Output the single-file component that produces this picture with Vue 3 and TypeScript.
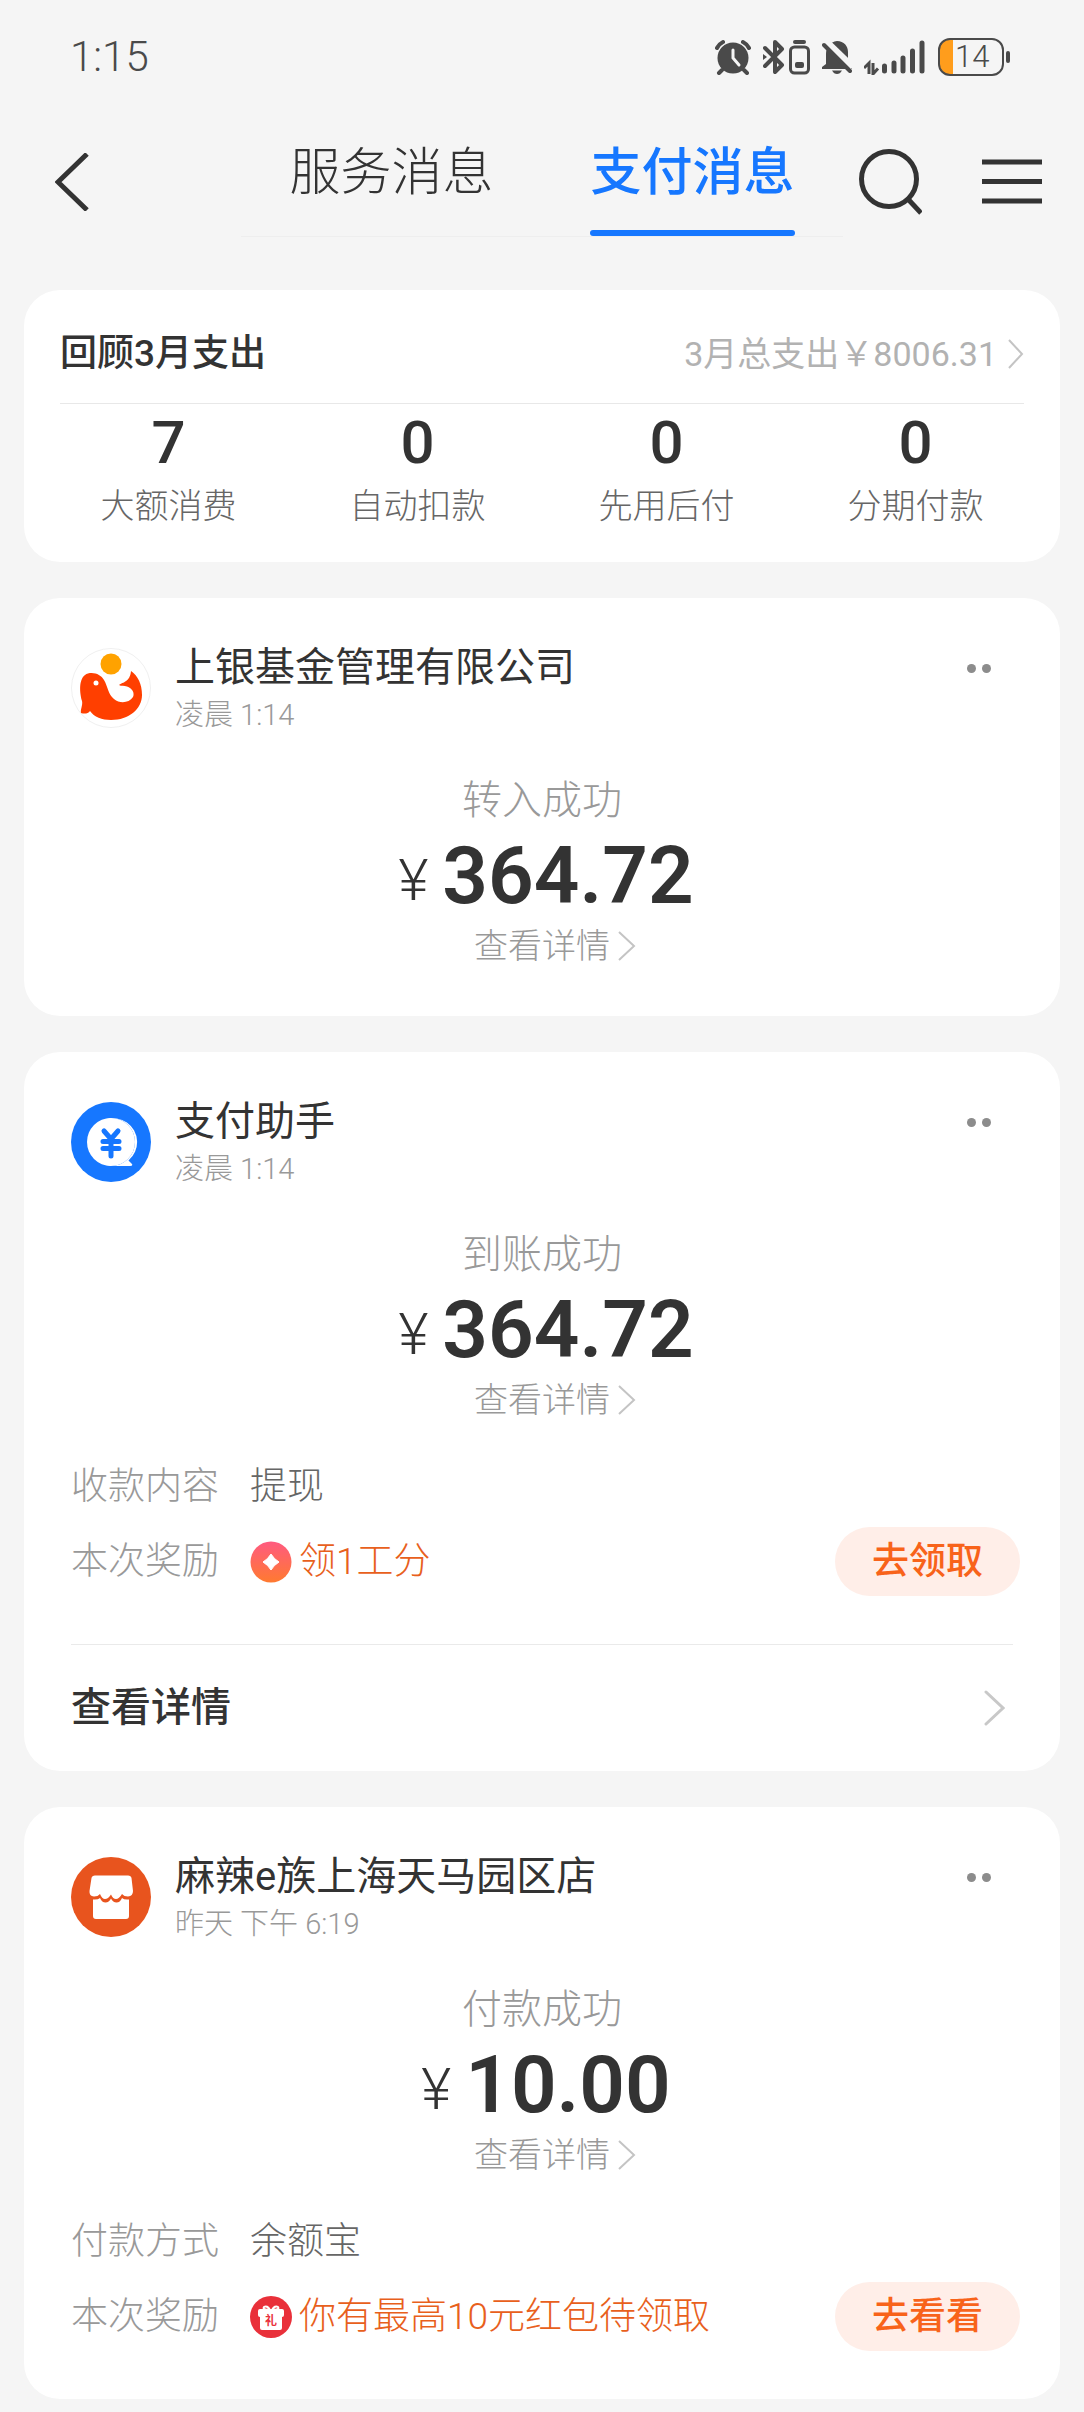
<script setup lang="ts">
interface Stat {
  value: number
  label: string
}

interface Detail {
  label: string
  value: string
  icon?: 'coin' | 'gift'
  action?: string
}

interface Message {
  logo: 'whale' | 'yuan' | 'shop'
  sender: string
  time: string
  status: string
  amount: string
  details: Detail[]
  footer?: string
}

const stats: Stat[] = [
  { value: 7, label: '大额消费' },
  { value: 0, label: '自动扣款' },
  { value: 0, label: '先用后付' },
  { value: 0, label: '分期付款' },
]

const messages: Message[] = [
  {
    logo: 'whale',
    sender: '上银基金管理有限公司',
    time: '凌晨 1:14',
    status: '转入成功',
    amount: '364.72',
    details: [],
  },
  {
    logo: 'yuan',
    sender: '支付助手',
    time: '凌晨 1:14',
    status: '到账成功',
    amount: '364.72',
    details: [
      { label: '收款内容', value: '提现' },
      { label: '本次奖励', value: '领1工分', icon: 'coin', action: '去领取' },
    ],
    footer: '查看详情',
  },
  {
    logo: 'shop',
    sender: '麻辣e族上海天马园区店',
    time: '昨天 下午 6:19',
    status: '付款成功',
    amount: '10.00',
    details: [
      { label: '付款方式', value: '余额宝' },
      { label: '本次奖励', value: '你有最高10元红包待领取', icon: 'gift', action: '去看看' },
    ],
  },
]
</script>

<template>
  <div class="page">
    <div class="status-bar">
      <span class="clock">1:15</span>
      <div class="status-icons">
        <svg class="i-alarm" width="36" height="36" viewBox="0 0 36 36">
          <circle cx="18" cy="19" r="15.500" fill="#4a4a4a" />
          <path d="M2 9Q4 5 8 3M34 9Q32 5 28 3M7 31L4 34M29 31L32 34" fill="none" stroke="#4a4a4a" stroke-width="4" stroke-linecap="round" />
          <path d="M18 11V19L24 26" fill="none" stroke="#f5f5f5" stroke-width="3" stroke-linecap="round" />
        </svg>
        <svg class="i-bt" width="22" height="36" viewBox="0 0 22 36">
          <path d="M2 9L19 26L12 33V3L19 10L2 27" fill="none" stroke="#4a4a4a" stroke-width="4" stroke-linecap="round" stroke-linejoin="round" />
          <path d="M0 15L4 18L0 21Z" fill="#4a4a4a" />
        </svg>
        <svg class="i-device" width="21" height="36" viewBox="0 0 21 36">
          <rect x="4" y="1" width="13" height="4" rx="2" fill="#4a4a4a" />
          <rect x="1.500" y="8" width="18" height="26" rx="4" fill="none" stroke="#4a4a4a" stroke-width="3" />
          <rect x="6" y="23" width="9" height="6" rx="2" fill="#4a4a4a" />
        </svg>
        <svg class="i-bell" width="30" height="36" viewBox="0 0 30 36">
          <path d="M15 2C8 3 4 9 4 15V25L0 28V30H30V27L26 22V13C26 7 22 2 15 2Z" fill="#4a4a4a" />
          <path d="M10 31.500H20Q18 35 15 35T10 31.500Z" fill="#4a4a4a" />
          <path d="M0 0L30 29" stroke="#f5f5f5" stroke-width="9" />
          <path d="M2 6L28 32" stroke="#4a4a4a" stroke-width="4" stroke-linecap="round" />
        </svg>
        <svg class="i-signal" width="62" height="36" viewBox="0 0 62 36">
          <path d="M0 29L5 24V35M9 24V35L14 29.500" fill="none" stroke="#4a4a4a" stroke-width="3" />
          <path d="M20.500 27V32M30 24V32M39 19V32M48.500 12V32M58 4V32" stroke="#4a4a4a" stroke-width="5" stroke-linecap="round" />
        </svg>
        <div class="battery">
          <span class="battery-body">14</span>
          <span class="battery-cap"></span>
        </div>
      </div>
    </div>

    <nav class="nav">
      <button class="icon-button" type="button" aria-label="返回">
        <svg width="34" height="58" viewBox="0 0 34 58">
          <path d="M32 1L3 29L32 57" fill="none" stroke="#333" stroke-width="5" />
        </svg>
      </button>
      <div class="tabs" role="tablist">
        <button class="tab" type="button" role="tab" aria-selected="false">
          <span class="tab-label">服务消息</span>
        </button>
        <button class="tab active" type="button" role="tab" aria-selected="true">
          <span class="tab-label">支付消息</span>
        </button>
      </div>
      <button class="icon-button" type="button" aria-label="搜索">
        <svg width="63" height="66" viewBox="0 0 63 66">
          <circle cx="30" cy="30" r="27.500" fill="none" stroke="#333" stroke-width="5" />
          <path d="M48 49L62 64" stroke="#333" stroke-width="5" />
        </svg>
      </button>
      <button class="icon-button menu" type="button" aria-label="菜单">
        <svg width="60" height="46" viewBox="0 0 60 46">
          <path d="M0 3H60M0 22.500H60M0 42H60" stroke="#333" stroke-width="5" />
        </svg>
      </button>
    </nav>

    <main class="feed">
      <section class="card summary">
        <div class="summary-head">
          <h2 class="summary-title">回顾3月支出</h2>
          <a class="summary-link" href="#">
            <span>3月总支出￥8006.31</span>
            <svg width="16" height="30" viewBox="0 0 16 30">
              <path d="M1 1L14 15L1 29" fill="none" stroke="#c4c4c4" stroke-width="2" />
            </svg>
          </a>
        </div>
        <ul class="stats">
          <li v-for="stat in stats" :key="stat.label" class="stat">
            <span class="stat-value">{{ stat.value }}</span>
            <span class="stat-label">{{ stat.label }}</span>
          </li>
        </ul>
      </section>

      <article v-for="message in messages" :key="message.sender" class="card message">
        <header class="head">
          <svg v-if="message.logo === 'whale'" class="logo" viewBox="0 0 80 80">
            <circle cx="40" cy="40" r="39.500" fill="#fff" stroke="#f0f0f0" />
            <circle cx="40" cy="16" r="10.500" fill="#ffa200" />
            <path d="M17 25.500C24 24 30 27 33 32C37 39 37 46 43 51C49 56 58 55 62 49C64 45 61 40 56 38.500C53 37.500 50 38.500 48 37C52 34 59 34 60 23C67 28 71 36 71 47C71 61 58 72 40 72C31 72 23 69 19 63C17 66 13 66 10 65C9 62 12 57 11 53C8 42 8 28 17 25.500Z" fill="#ff3f00" />
            <circle cx="25" cy="35" r="2.500" fill="#fff" />
          </svg>
          <svg v-else-if="message.logo === 'yuan'" class="logo" viewBox="0 0 80 80">
            <circle cx="40" cy="40" r="40" fill="#1677ff" />
            <path d="M40 16A24 24 0 1 1 40 64H59Q62 64 61 62L57.500 58.500A24 24 0 1 0 40 64Z" fill="#fff" />
            <circle cx="40" cy="40" r="24" fill="#fff" />
            <path d="M33 29L40 37L47 29M40 37V54M32 39.500H48M32 46.500H48" fill="none" stroke="#1677ff" stroke-width="5" stroke-linecap="round" stroke-linejoin="round" />
          </svg>
          <svg v-else class="logo" viewBox="0 0 80 80">
            <circle cx="40" cy="40" r="40" fill="#e8541e" />
            <path d="M24 18.500H57Q60 18.500 60.500 21L62 34Q62 39 57 39.500Q53 39.500 51 37Q48 42 45 42T40 37.500Q37 42 34 42T29 37Q27 39.500 23 39.500Q18 39 18.500 34L20.500 21Q21 18.500 24 18.500Z" fill="#fff" />
            <path d="M22 42.500Q27 43 29 41Q31 45.500 34.500 45.500T40 41.500Q42 45.500 45.500 45.500T51 41Q53 43 58 42.500V59Q58 62 55 62H25Q22 62 22 59Z" fill="#fff" />
          </svg>
          <div class="who">
            <h3 class="sender">{{ message.sender }}</h3>
            <time class="time">{{ message.time }}</time>
          </div>
          <button class="more" type="button" aria-label="更多">
            <span class="dot"></span>
            <span class="dot"></span>
          </button>
        </header>

        <div class="body">
          <p class="status">{{ message.status }}</p>
          <p class="amount">
            <span class="currency">¥</span>
            <strong class="number">{{ message.amount }}</strong>
          </p>
          <a class="view" href="#">
            <span>查看详情</span>
            <svg width="18" height="30" viewBox="0 0 18 30">
              <path d="M1 1L16 15L1 29" fill="none" stroke="#c4c4c4" stroke-width="2" />
            </svg>
          </a>
        </div>

        <dl v-if="message.details.length" class="details">
          <div v-for="detail in message.details" :key="detail.label" class="detail">
            <dt class="detail-label">{{ detail.label }}</dt>
            <dd class="detail-value" :class="{ reward: detail.icon }">
              <svg v-if="detail.icon === 'coin'" width="42" height="42" viewBox="0 0 42 42">
                <defs>
                  <linearGradient id="coin-fill" x1="0" y1="0" x2="0" y2="1">
                    <stop offset="0" stop-color="#ff5a80" />
                    <stop offset="1" stop-color="#ff7a30" />
                  </linearGradient>
                </defs>
                <circle cx="21" cy="21" r="20.500" fill="url(#coin-fill)" />
                <path d="M21 13Q24 18 29 21Q24 24 21 29Q18 24 13 21Q18 18 21 13Z" fill="#fff" stroke="#fff" stroke-linejoin="round" />
              </svg>
              <svg v-else-if="detail.icon === 'gift'" width="42" height="42" viewBox="0 0 42 42">
                <circle cx="21" cy="21" r="21" fill="#e9303a" />
                <rect x="8" y="13" width="26" height="8" rx="2" fill="#fff" />
                <rect x="10" y="16" width="22" height="18" rx="2" fill="#fff" />
                <path d="M20 14Q12 14 14 11Q17 9 20 14ZM22 14Q30 14 28 11Q25 9 22 14Z" fill="#e9303a" stroke="#fff" stroke-width="2" />
                <text x="21" y="29" class="gift-text" text-anchor="middle">礼</text>
              </svg>
              <span>{{ detail.value }}</span>
            </dd>
            <dd v-if="detail.action" class="detail-action">
              <button class="pill" type="button">{{ detail.action }}</button>
            </dd>
          </div>
        </dl>

        <a v-if="message.footer" class="footer" href="#">
          <span>{{ message.footer }}</span>
          <svg width="21" height="36" viewBox="0 0 21 36">
            <path d="M2 2L19 18L2 34" fill="none" stroke="#c8c8c8" stroke-width="3" stroke-linecap="round" />
          </svg>
        </a>
      </article>
    </main>
  </div>
</template>

<style>
body {
  background: #f5f5f5;
}
</style>

<style scoped>
.page {
  min-height: 100vh;
  box-sizing: border-box;
  background: #f5f5f5;
  color: #333;
  font-family: Roboto, 'Noto Sans CJK SC', sans-serif;
  font-weight: 300;
}

h2,
h3,
p,
ul,
dl,
dd {
  margin: 0;
  padding: 0;
}

button {
  border: 0;
  padding: 0;
  background: none;
  color: inherit;
  font: inherit;
  cursor: pointer;
}

a {
  color: inherit;
  text-decoration: none;
}

svg {
  display: block;
  flex: none;
}

.status-bar {
  display: flex;
  align-items: center;
  justify-content: space-between;
  height: 114px;
  padding: 0 74px 0 70px;
}

.clock {
  color: #4a4a4a;
  font-size: 42px;
  line-height: 50px;
}

.status-icons {
  display: flex;
  align-items: center;
}

.i-alarm,
.i-device,
.i-bell,
.i-signal {
  margin-right: 12px;
}

.i-bt {
  margin-right: 4px;
}

.battery {
  display: flex;
  align-items: center;
  gap: 2px;
}

.battery-body {
  box-sizing: border-box;
  width: 66px;
  height: 38px;
  padding-left: 15px;
  border: 2px solid #4a4a4a;
  border-radius: 12px;
  background: linear-gradient(90deg, #ff9d1c 13px, transparent 13px);
  color: #4a4a4a;
  font-size: 31px;
  line-height: 34px;
}

.battery-cap {
  width: 4px;
  height: 12px;
  border-radius: 2px;
  background: #4a4a4a;
}

.nav {
  display: flex;
  align-items: center;
  height: 110px;
  margin-top: 13px;
  padding: 0 42px 0 55px;
}

.icon-button.menu {
  margin-left: 60px;
}

.tabs {
  display: flex;
  flex: 1;
  align-self: stretch;
  margin: 0 16px 0 152px;
  border-bottom: 1px solid #eee;
}

.tab {
  display: flex;
  flex: 1;
  justify-content: center;
}

.tab-label {
  position: relative;
  height: 109px;
  font-size: 51px;
  line-height: 92px;
}

.tab.active .tab-label {
  color: #1677ff;
  font-weight: 500;
}

.tab.active .tab-label::after {
  content: '';
  position: absolute;
  right: 0;
  bottom: 0;
  left: 0;
  height: 6px;
  border-radius: 3px;
  background: #1677ff;
}

.feed {
  display: flex;
  flex-direction: column;
  gap: 36px;
  padding: 53px 24px 13px;
}

.card {
  border-radius: 36px;
  background: #fff;
}

.summary {
  padding: 0 20px 32px;
}

.summary-head {
  display: flex;
  align-items: center;
  justify-content: space-between;
  height: 98px;
  margin: 0 16px;
  padding-top: 15px;
  border-bottom: 1px solid #e8e8e8;
}

.summary-title {
  font-size: 37px;
  font-weight: 500;
  line-height: 50px;
}

.summary-link {
  display: flex;
  align-items: center;
  gap: 11px;
  color: #b2b2b2;
  font-size: 34px;
  font-weight: 400;
  line-height: 50px;
}

.stats {
  display: flex;
  list-style: none;
}

.stat {
  display: flex;
  flex: 1;
  flex-direction: column;
  align-items: center;
}

.stat-value {
  font-size: 60px;
  font-weight: 500;
  line-height: 78px;
}

.stat-label {
  color: #666;
  font-size: 34px;
  line-height: 48px;
}

.message {
  padding: 45px 40px 45px 47px;
}

.head {
  display: flex;
  align-items: flex-start;
}

.logo {
  width: 80px;
  height: 80px;
  margin: 5px 24px 0 0;
}

.who {
  flex: 1;
}

.sender {
  font-size: 40px;
  font-weight: 400;
  line-height: 50px;
}

.time {
  display: block;
  padding-bottom: 2px;
  color: #999;
  font-size: 29px;
  line-height: 44px;
}

.more {
  display: flex;
  align-items: center;
  gap: 6px;
  height: 50px;
  margin-right: 29px;
}

.dot {
  width: 9px;
  height: 9px;
  border-radius: 50%;
  background: #8c8c8c;
}

.body {
  display: flex;
  flex-direction: column;
  align-items: center;
  margin-top: 32px;
  margin-right: 7px;
}

.status {
  color: #999;
  font-size: 40px;
  line-height: 60px;
}

.amount {
  display: flex;
  align-items: center;
  gap: 14px;
  height: 90px;
  padding-left: 8px;
}

.currency {
  padding-top: 8px;
  font-size: 58px;
  line-height: 60px;
}

.number {
  font-size: 80px;
  font-weight: 600;
  line-height: 90px;
}

.view {
  display: flex;
  align-items: center;
  gap: 8px;
  padding-left: 26px;
  color: #999;
  font-size: 34px;
  line-height: 50px;
}

.details {
  margin-top: 24px;
}

.detail {
  display: flex;
  align-items: center;
  height: 75px;
  font-size: 37px;
  line-height: 50px;
}

.detail-label {
  width: 179px;
  color: #999;
}

.detail-value {
  display: flex;
  flex: 1;
  align-items: center;
  gap: 7px;
  color: #666;
}

.reward {
  color: #e8601c;
}

.gift-text {
  fill: #e9303a;
  font-size: 12px;
  font-weight: 700;
}

.pill {
  display: block;
  width: 185px;
  height: 69px;
  border-radius: 35px;
  background: #ffeee8;
  color: #f8631a;
  font-size: 37px;
  font-weight: 500;
  line-height: 50px;
}

.footer {
  display: flex;
  align-items: center;
  justify-content: space-between;
  box-sizing: border-box;
  height: 127px;
  margin: 45px 7px -45px 0;
  padding-right: 8px;
  border-top: 1px solid #eaeaea;
  font-size: 40px;
  font-weight: 500;
  line-height: 50px;
}
</style>
